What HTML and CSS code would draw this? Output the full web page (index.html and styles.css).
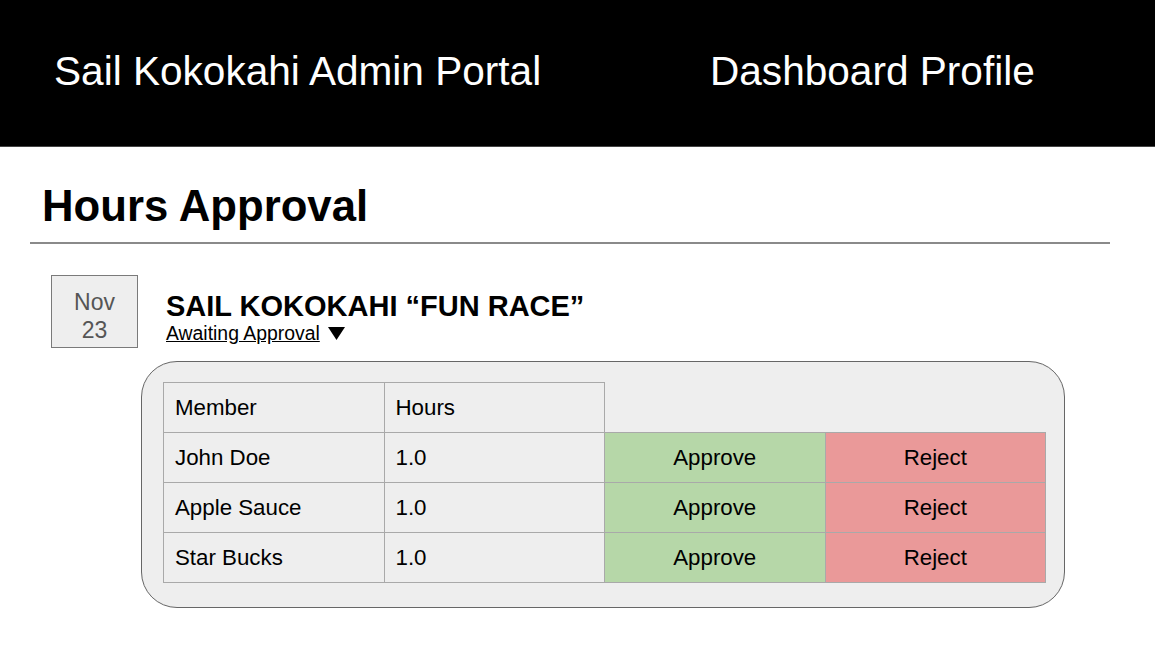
FILE: index.html
```html
<!DOCTYPE html>
<html lang="en">
<head>
<meta charset="utf-8">
<title>Sail Kokokahi Admin Portal</title>
<link rel="stylesheet" href="styles.css">
</head>
<body>
<header class="topbar">
  <div class="brand">Sail Kokokahi Admin Portal</div>
  <nav class="nav">Dashboard Profile</nav>
</header>
<main class="main">
  <h1 class="page-title">Hours Approval</h1>
  <div class="rule"></div>
  <section class="event">
    <div class="event-head">
      <div class="date-box">
        <div>Nov</div>
        <div>23</div>
      </div>
      <div class="event-info">
        <div class="event-title">SAIL KOKOKAHI “FUN RACE”</div>
        <div class="event-status"><a class="status-link" href="#">Awaiting Approval</a><svg class="caret" width="17" height="13" viewBox="0 0 17 13"><polygon points="0,0 17,0 8.5,13" fill="#000"/></svg></div>
      </div>
    </div>
    <div class="panel">
      <table class="hours">
        <thead>
          <tr><th>Member</th><th>Hours</th><th class="empty"></th><th class="empty"></th></tr>
        </thead>
        <tbody>
          <tr><td>John Doe</td><td>1.0</td><td class="approve">Approve</td><td class="reject">Reject</td></tr>
          <tr><td>Apple Sauce</td><td>1.0</td><td class="approve">Approve</td><td class="reject">Reject</td></tr>
          <tr><td>Star Bucks</td><td>1.0</td><td class="approve">Approve</td><td class="reject">Reject</td></tr>
        </tbody>
      </table>
    </div>
  </section>
</main>
</body>
</html>
```
FILE: styles.css
```css
* { box-sizing: border-box; }
body {
  margin: 0;
  font-family: "Liberation Sans", Arial, sans-serif;
  color: #000;
  background: #fff;
}
.topbar {
  height: 147px;
  background: #000;
  border-bottom: 1px solid #444;
  color: #fff;
  display: grid;
  grid-template-columns: 656px 1fr;
  align-items: center;
  padding: 0 0 4px 54px;
  font-size: 40.6px;
  line-height: 46px;
}
.main {
  padding: 0 45px 0 30px;
}
.page-title {
  margin: 34px 0 0 12px;
  font-size: 43.7px;
  line-height: 50px;
  font-weight: bold;
}
.rule {
  margin-top: 11px;
  width: 1080px;
  height: 2px;
  background: #8a8a8a;
}
.event-head {
  display: flex;
  margin: 31px 0 0 21px;
  gap: 28px;
}
.date-box {
  width: 87px;
  height: 73px;
  border: 1px solid #7a7a7a;
  background: #eeeeee;
  color: #555;
  font-size: 23px;
  line-height: 28px;
  text-align: center;
  padding-top: 12px;
}
.event-info {
  padding-top: 15px;
}
.event-title {
  font-size: 29px;
  line-height: 32px;
  font-weight: bold;
}
.event-status {
  display: flex;
  align-items: center;
  gap: 8px;
  font-size: 19.4px;
  line-height: 22px;
}
.status-link {
  color: #000;
  text-decoration: underline;
}
.caret { display: block; margin-top: 1px; }
.panel {
  margin: 13px 0 0 111px;
  width: 924px;
  border: 1px solid #666;
  border-radius: 36px;
  background: #eeeeee;
  padding: 20px 18px 24px 21px;
}
.hours {
  border-collapse: collapse;
  table-layout: fixed;
  width: 883px;
  font-size: 22.3px;
}
.hours th, .hours td {
  height: 50px;
  border: 1px solid #a9a9a9;
  padding: 0 11px;
  text-align: left;
  font-weight: normal;
  vertical-align: middle;
}
.hours th.empty { border: none; }
.hours td.approve {
  background: #b6d7a8;
  text-align: center;
}
.hours td.reject {
  background: #ea9999;
  text-align: center;
}
```
